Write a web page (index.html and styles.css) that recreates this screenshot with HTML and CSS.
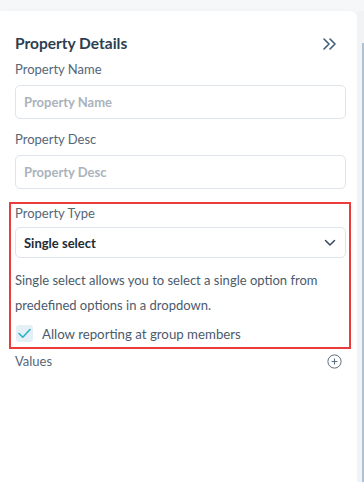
FILE: index.html
```html
<!DOCTYPE html>
<html lang="en">
<head>
  <meta charset="UTF-8">
  <title>Property Details</title>
  <link rel="stylesheet" href="styles.css">
</head>
<body>
  <div class="page">
    <div class="panel">
      <div class="panel-head">
        <h2>Property Details</h2>
        <svg class="collapse" width="16" height="14" viewBox="0 0 16 14">
          <path d="M2 2 L7 7 L2 12 M8 2 L13 7 L8 12" fill="none" stroke="#3f5b76" stroke-width="1.6" stroke-linecap="round" stroke-linejoin="round"/>
        </svg>
      </div>

      <div class="field">
        <label>Property Name</label>
        <div class="input placeholder">Property Name</div>
      </div>

      <div class="field">
        <label>Property Desc</label>
        <div class="input placeholder">Property Desc</div>
      </div>

      <div class="highlight">
        <label>Property Type</label>
        <div class="select">
          <span>Single select</span>
          <svg width="12" height="8" viewBox="0 0 12 8">
            <path d="M1.5 1.5 L6 6 L10.5 1.5" fill="none" stroke="#34495e" stroke-width="1.5" stroke-linecap="round" stroke-linejoin="round"/>
          </svg>
        </div>
        <p class="hint">Single select allows you to select a single option from predefined options in a dropdown.</p>
        <div class="check-row">
          <span class="checkbox">
            <svg width="13" height="11" viewBox="0 0 13 11">
              <path d="M1 5.5 L4.8 9.2 L12 1.5" fill="none" stroke="#26b3c6" stroke-width="1.6" stroke-linecap="round" stroke-linejoin="round"/>
            </svg>
          </span>
          <span>Allow reporting at group members</span>
        </div>
      </div>

      <div class="values-row">
        <span>Values</span>
        <svg width="15" height="15" viewBox="0 0 15 15">
          <circle cx="7.5" cy="7.5" r="6.6" fill="none" stroke="#5d6f80" stroke-width="1"/>
          <path d="M7.5 4.6 V10.4 M4.6 7.5 H10.4" stroke="#5d6f80" stroke-width="1.1"/>
        </svg>
      </div>
    </div>
    <div class="track"><div class="thumb"></div></div>
  </div>
</body>
</html>
```

FILE: styles.css
```css
:root {
  --bg: #f6f7f9;
  --panel: #ffffff;
  --title: #2c3e50;
  --label: #556677;
  --text: #4b5b6b;
  --border: #dfe4ea;
  --placeholder: #aab3bc;
  --red: #ec3b3b;
}
* { box-sizing: border-box; margin: 0; padding: 0; }
body {
  font-family: Lato, "Open Sans", sans-serif;
  background: var(--bg);
  color: var(--text);
}
.page {
  display: flex;
  height: 482px;
  padding-top: 11px;
}
.panel {
  flex: 1;
  background: var(--panel);
  border-radius: 0 7px 0 0;
  box-shadow: 0 0 4px rgba(0, 0, 0, 0.03);
  padding: 22px 11px 0 15px;
}
.track {
  width: 7px;
  background: #f1f3f5;
}
.thumb {
  margin: 32px 0 0 5px;
  width: 2px;
  height: calc(100% - 32px);
  background: #aec2d4;
}
.panel-head {
  display: flex;
  justify-content: space-between;
  align-items: center;
  padding-right: 8px;
  height: 20px;
}
.panel-head h2 {
  font-size: 15.5px;
  font-weight: 700;
  color: var(--title);
}
.collapse {
  margin-top: 1px;
}
label {
  display: block;
  font-size: 13px;
  color: var(--label);
  line-height: 18px;
}
.field {
  margin-top: 7px;
}
.field + .field {
  margin-top: 11px;
}
.input {
  margin-top: 7px;
  height: 34px;
  border: 1px solid var(--border);
  border-radius: 5px;
  padding: 0 8px;
  display: flex;
  align-items: center;
  font-size: 13px;
}
.placeholder {
  color: var(--placeholder);
  font-weight: 700;
}
.highlight {
  margin: 13px -5px 0 -6px;
  border: 2px solid var(--red);
  padding: 0 3px 5px 4px;
}
.select {
  margin-top: 5px;
  height: 31px;
  border: 1px solid var(--border);
  border-radius: 5px;
  padding: 0 9px 0 8px;
  display: flex;
  align-items: center;
  justify-content: space-between;
  font-size: 13px;
  font-weight: 700;
  color: #222b33;
}
.hint {
  margin-top: 10px;
  font-size: 13px;
  line-height: 25px;
  color: var(--text);
}
.check-row {
  display: flex;
  align-items: center;
  gap: 9px;
  margin-top: 7px;
  margin-left: 1px;
  font-size: 13.25px;
  color: var(--text);
}
.checkbox {
  width: 17px;
  height: 17px;
  border-radius: 3px;
  background: #e4eff6;
  display: flex;
  align-items: center;
  justify-content: center;
}
.values-row {
  display: flex;
  justify-content: space-between;
  align-items: center;
  margin-top: 4px;
  padding-right: 4px;
  font-size: 13px;
  color: var(--label);
}
```
